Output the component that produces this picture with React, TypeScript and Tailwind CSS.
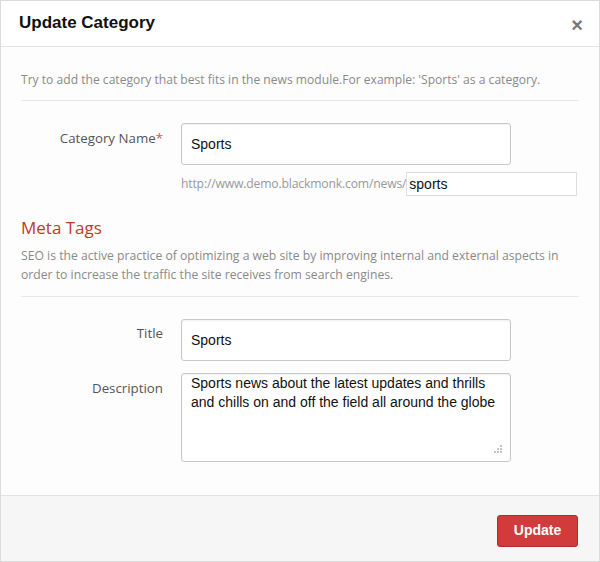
import React from 'react';

const sans = "font-['Open_Sans',sans-serif]";
const arial = "font-['Liberation_Sans',Arial,sans-serif]";

const Grip = () => (
  <svg width="10" height="10" viewBox="0 0 10 10" className="absolute right-[8px] bottom-[7px]">
    {[
      [8, 1],
      [5, 4],
      [8, 4],
      [2, 7],
      [5, 7],
      [8, 7],
    ].map(([x, y], i) => (
      <rect key={i} x={x} y={y} width="2" height="2" fill="#c4c4c4" />
    ))}
  </svg>
);

export default function App() {
  return (
    <div className="w-[600px] h-[562px] bg-white border border-[#dcdcdc] flex flex-col overflow-hidden">
      {/* Header */}
      <div className="h-[46px] shrink-0 flex items-center justify-between pl-[18px] pr-[16px] border-b border-[#e3e3e3] bg-white">
        <h1 className={`${arial} text-[17px] font-bold text-[#111] mt-[-2px]`}>Update Category</h1>
        <span className={`${arial} text-[20px] font-bold text-[#777] leading-none mt-[2px]`}>×</span>
      </div>

      {/* Body */}
      <div className={`${sans} flex-1 bg-[#fdfdfd] px-[20px] pt-[24px] text-[#8a8a8a]`}>
        <p className="text-[12.1px] leading-[18px] pb-[11px] border-b border-[#e8e8e8]">
          Try to add the category that best fits in the news module.For example: 'Sports' as a category.
        </p>

        <div className="flex gap-[18px] mt-[22px]">
          <label className="w-[142px] shrink-0 text-right text-[13.3px] text-[#555] pt-[6px]">
            Category Name<span className="text-[#d9534f]">*</span>
          </label>
          <div className="flex flex-col">
            <div className={`${arial} w-[330px] h-[42px] border border-[#c8c8c8] rounded-[3px] bg-white shadow-[inset_0_1px_2px_rgba(0,0,0,0.06)] flex items-center px-[9px] text-[14px] text-[#111]`}>
              Sports
            </div>
            <div className="flex items-center mt-[7px]">
              <span className="text-[12.2px] text-[#999] tracking-[-0.18px]">http://www.demo.blackmonk.com/news/</span>
              <div className={`${arial} flex-1 h-[24px] border border-[#dedede] bg-white flex items-center px-[2px] text-[14px] text-[#111] mr-[-66px]`}>
                sports
              </div>
            </div>
          </div>
        </div>

        <h2 className="text-[17px] text-[#c0392b] mt-[20px] leading-[24px]">Meta Tags</h2>
        <p className="text-[12.2px] leading-[19px] mt-[6px] pb-[12px] border-b border-[#e8e8e8]">
          SEO is the active practice of optimizing a web site by improving internal and external aspects in order to increase the traffic the site receives from search engines.
        </p>

        <div className="flex gap-[18px] mt-[22px]">
          <label className="w-[142px] shrink-0 text-right text-[13.3px] text-[#555] pt-[5px]">Title</label>
          <div className={`${arial} w-[330px] h-[42px] border border-[#c8c8c8] rounded-[3px] bg-white shadow-[inset_0_1px_2px_rgba(0,0,0,0.06)] flex items-center px-[9px] text-[14px] text-[#111]`}>
            Sports
          </div>
        </div>

        <div className="flex gap-[18px] mt-[12px]">
          <label className="w-[142px] shrink-0 text-right text-[13.3px] text-[#555] pt-[6px]">Description</label>
          <div className={`${arial} relative w-[330px] h-[89px] border border-[#c8c8c8] rounded-[3px] bg-white shadow-[inset_0_1px_2px_rgba(0,0,0,0.06)] px-[9px] pt-0 text-[14px] leading-[19px] text-[#111]`}>
            Sports news about the latest updates and thrills and chills on and off the field all around the globe
            <Grip />
          </div>
        </div>
      </div>

      {/* Footer */}
      <div className="h-[66px] shrink-0 bg-[#f6f6f6] border-t border-[#e3e3e3] flex items-center justify-end pr-[21px]">
        <button className={`${arial} w-[81px] h-[32px] rounded-[3px] bg-[#d13b3b] border border-[#b02b2b] text-white text-[14px] font-bold mt-[4px]`}>
          Update
        </button>
      </div>
    </div>
  );
}
